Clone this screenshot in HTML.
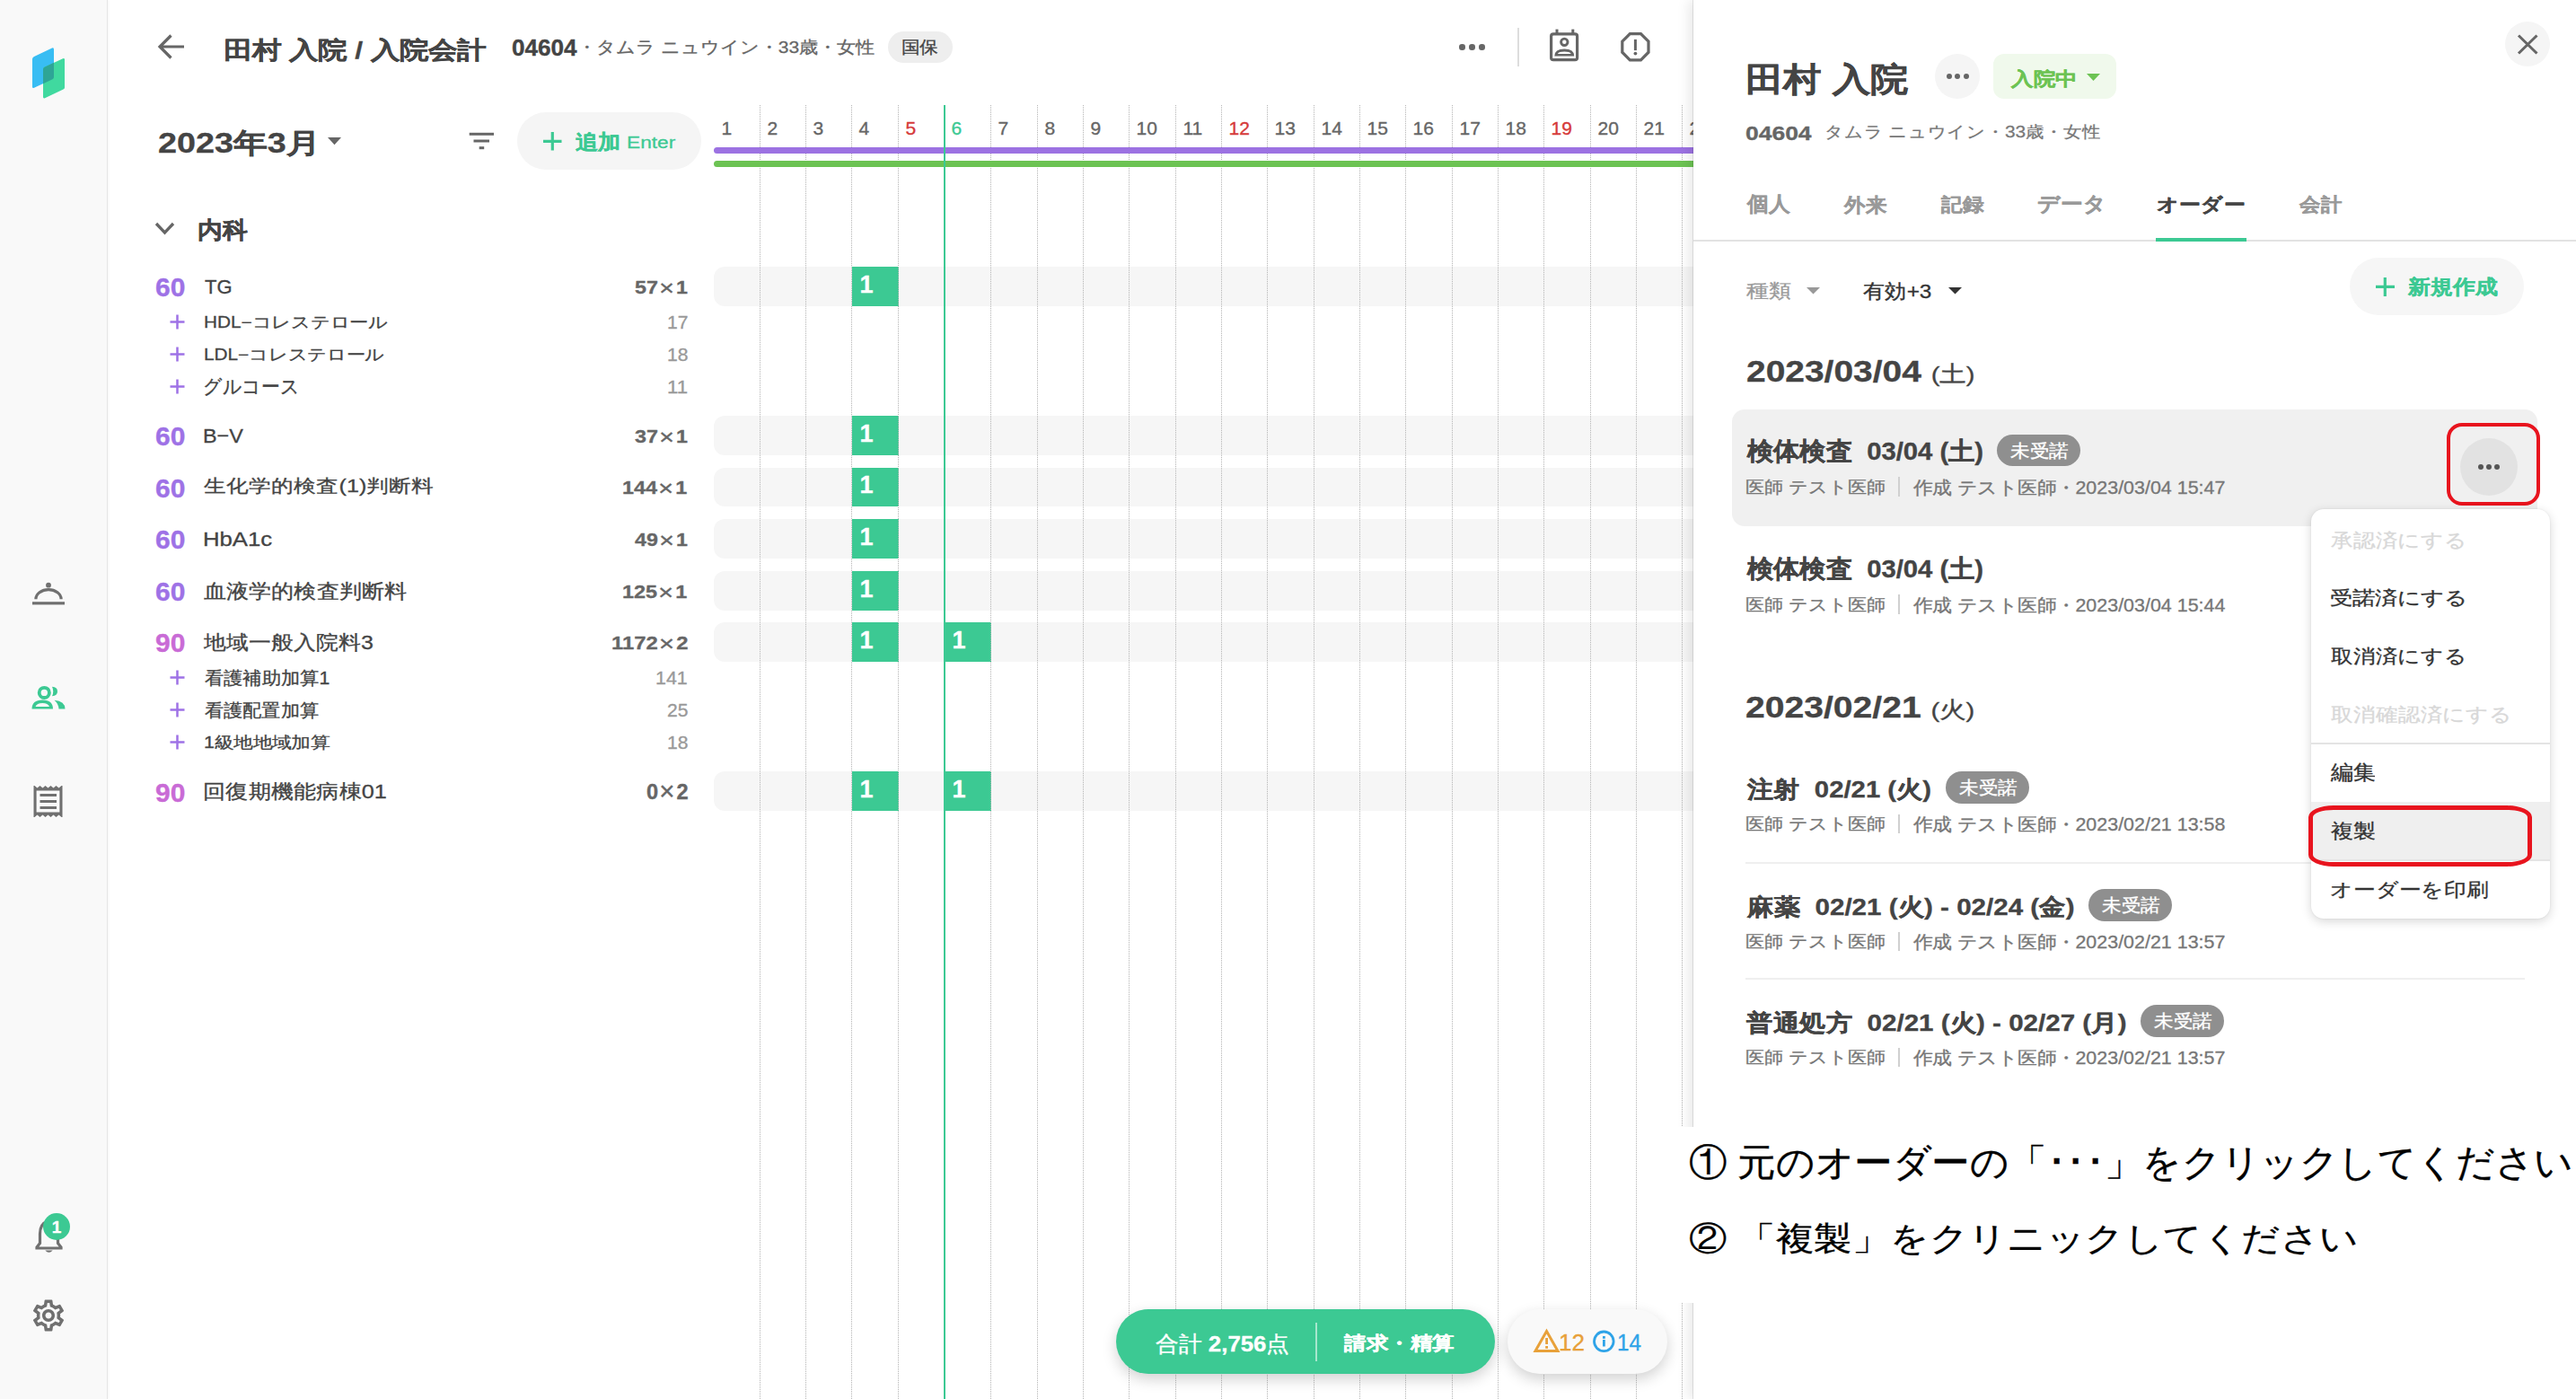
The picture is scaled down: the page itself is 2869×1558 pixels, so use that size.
<!DOCTYPE html><html lang="ja"><head><meta charset="utf-8"><title>order</title><style>
*{box-sizing:border-box;margin:0;padding:0}
html,body{width:2869px;height:1558px;overflow:hidden;background:#fff}
body{position:relative;font-family:"Liberation Sans",sans-serif;color:#444}
.a{position:absolute}
.t{position:absolute;white-space:nowrap;line-height:1;-webkit-text-stroke:0.35px currentColor}
</style></head><body>
<div class="a" style="left:0;top:0;width:120px;height:1558px;background:#f9f9f9;border-right:1px solid #e6e6e6;box-shadow:1px 0 2px rgba(0,0,0,0.04)"></div>
<svg class="a" style="left:30px;top:48px" width="48" height="68" viewBox="30 48 48 68">
<path d="M36 66 Q36 64 38 63 L58 53.5 Q60 52.7 60 55 L60 86 Q60 87.5 58.5 88.2 L38 97.8 Q36 98.6 36 96.5 Z" fill="#38bdf3"/>
<path d="M48 77 Q48 75.5 49.5 74.8 L70 65.2 Q72 64.5 72 66.5 L72 97.5 Q72 99 70.5 99.6 L50 109.3 Q48 110 48 108 Z" fill="#40d99f"/>
<path d="M48 77 Q48 75.5 49.5 74.8 L60 69.8 L60 86 Q60 87.5 58.5 88.2 L48 93.2 Z" fill="#2ea596"/>
</svg>
<svg class="a" style="left:34px;top:646px" width="40" height="30" viewBox="0 0 40 30">
<circle cx="20" cy="5.7" r="2.9" fill="#707070"/>
<path d="M5.9 21.3 A14.1 10.6 0 0 1 34.1 21.3" fill="none" stroke="#707070" stroke-width="3.2"/>
<rect x="2" y="24.2" width="36" height="3.2" fill="#707070"/>
</svg>
<svg class="a" style="left:34px;top:762px" width="40" height="30" viewBox="0 0 40 30">
<circle cx="15.3" cy="9.4" r="5.6" fill="none" stroke="#3cc993" stroke-width="3.8"/>
<path d="M1.5 27.5 Q1.5 17.5 13.3 17.5 Q25 17.5 25 27.5 Z M5.5 25 Q7 21 13.3 21 Q19.5 21 21 25 Z" fill="#3cc993" fill-rule="evenodd"/>
<path d="M24 2.8 Q30 3 30 8 Q30 13 24 13.3 Q26.5 8 24 2.8 Z" fill="#3cc993"/>
<path d="M26.5 17.8 Q38.5 19 38.5 27.5 L31.5 27.5 Q31 21.5 26.5 17.8 Z" fill="#3cc993"/>
</svg>
<svg class="a" style="left:35px;top:873px" width="38" height="40" viewBox="0 0 38 40">
<path d="M3.5 2 L6.5 4.5 L9.5 2 L12.5 4.5 L15.5 2 L18.5 4.5 L21.5 2 L24.5 4.5 L27.5 2 L30.5 4.5 L33.5 2 L34.5 2 L34.5 37 L33.5 37 L30.5 34.5 L27.5 37 L24.5 34.5 L21.5 37 L18.5 34.5 L15.5 37 L12.5 34.5 L9.5 37 L6.5 34.5 L3.5 37 L2.5 37 L2.5 2 Z M5.6 7.5 L5.6 31.5 L31.4 31.5 L31.4 7.5 Z" fill="#707070" fill-rule="evenodd"/>
<rect x="9.5" y="11" width="18.5" height="3" fill="#707070"/>
<rect x="9.5" y="18" width="18.5" height="3" fill="#707070"/>
<rect x="9.5" y="25" width="18.5" height="3" fill="#707070"/>
</svg>
<svg class="a" style="left:36px;top:1352px" width="40" height="48" viewBox="0 0 40 48">
<path d="M17 8 Q8.5 11 8.5 22 L8.5 32.5 L5 37 L5 38 L32 38 L32 37 L28.5 32.5 L28.5 22" fill="none" stroke="#707070" stroke-width="3.2"/>
<path d="M14.3 40.5 Q18.5 45 22.7 40.5 Z" fill="#707070"/>
</svg>
<div class="a" style="left:48px;top:1351px;width:30px;height:30px;border-radius:50%;background:#3cc993"></div>
<div class="t" style="left:48px;top:1357px;width:30px;text-align:center;font-size:19px;font-weight:bold;color:#fff">1</div>
<svg class="a" style="left:33px;top:1444px" width="42" height="42" viewBox="0 0 24 24">
<path fill="#707070" d="M19.43 12.98c.04-.32.07-.64.07-.98 0-.34-.03-.66-.07-.98l2.110-1.650c.19-.15.24-.42.12-.64l-2-3.460a.5.5 0 0 0-.61-.22l-2.490 1c-.52-.4-1.080-.73-1.690-.98l-.38-2.650A.49.49 0 0 0 14 2h-4c-.25 0-.46.18-.49.42l-.38 2.650c-.61.25-1.170.59-1.690.98l-2.490-1a.5.5 0 0 0-.61.22l-2 3.460c-.13.22-.07.49.12.64l2.110 1.650c-.04.32-.07.65-.07.98 0 .33.03.66.07.98l-2.110 1.650c-.19.15-.24.42-.12.64l2 3.460c.12.22.39.3.61.22l2.490-1c.52.4 1.080.73 1.690.98l.38 2.650c.03.24.24.42.49.42h4c.25 0 .46-.18.49-.42l.38-2.650c.61-.25 1.170-.59 1.690-.98l2.490 1c.23.09.49 0 .61-.22l2-3.460c.12-.22.07-.49-.12-.64l-2.110-1.650zM17.45 11.27c.04.31.05.52.05.73 0 .21-.02.43-.05.73l-.14 1.130.89.7 1.080.84-.7 1.210-1.270-.51-1.040-.42-.9.68c-.43.32-.84.56-1.250.73l-1.060.43-.16 1.130-.2 1.350h-1.400l-.19-1.350-.16-1.130-1.060-.43c-.43-.18-.83-.41-1.230-.71l-.91-.7-1.060.43-1.270.51-.7-1.210 1.080-.84.89-.7-.14-1.130c-.03-.31-.05-.54-.05-.74s.02-.43.05-.73l.14-1.130-.89-.7-1.080-.84.7-1.210 1.270.51 1.040.42.9-.68c.43-.32.84-.56 1.250-.73l1.060-.43.16-1.130.2-1.350h1.390l.19 1.350.16 1.130 1.060.43c.43.18.83.41 1.230.71l.91.7 1.060-.43 1.270-.51.7 1.210-1.070.85-.89.7.14 1.130zM12 8c-2.210 0-4 1.790-4 4s1.790 4 4 4 4-1.790 4-4-1.790-4-4-4zm0 6c-1.100 0-2-.9-2-2s.9-2 2-2 2 .9 2 2-.9 2-2 2z"/>
</svg>
<svg class="a" style="left:172px;top:34px" width="38" height="36" viewBox="0 0 38 36">
<path d="M33 18 L6.5 18 M18.5 5.5 L6 18 L18.5 30.5" fill="none" stroke="#666" stroke-width="3.2"/>
</svg>
<div class="t" style="left:248.99px;top:42.60px;font-size:32px;color:#444;font-weight:bold;transform:scale(1.0035,0.8298);transform-origin:0 0;">田村 入院 / 入院会計</div>
<div class="t" style="left:569.96px;top:40.97px;font-size:25px;color:#444;font-weight:bold;transform:scale(1.0435,1.0000);transform-origin:0 0;">04604</div>
<div class="t" style="left:643.40px;top:43.91px;font-size:22px;color:#666;transform:scale(0.9555,0.8606);transform-origin:0 0;">・タムラ ニュウイン・33歳・女性</div>
<div class="a" style="left:989px;top:35px;width:72px;height:35px;border-radius:18px;background:#eee"></div>
<div class="t" style="left:1004.07px;top:44.02px;font-size:22px;color:#444;transform:scale(0.9310,0.8553);transform-origin:0 0;">国保</div>
<div class="a" style="left:1625.2px;top:49px;width:6.6px;height:6.6px;border-radius:50%;background:#666"></div>
<div class="a" style="left:1636.3px;top:49px;width:6.6px;height:6.6px;border-radius:50%;background:#666"></div>
<div class="a" style="left:1647.1000000000001px;top:49px;width:6.6px;height:6.6px;border-radius:50%;background:#666"></div>
<div class="a" style="left:1690px;top:31px;width:2px;height:43px;background:#ddd"></div>
<svg class="a" style="left:1724px;top:30px" width="38" height="42" viewBox="0 0 38 42">
<rect x="3.6" y="7.9" width="29" height="28.8" rx="2.5" fill="none" stroke="#666" stroke-width="3.2"/>
<rect x="8.5" y="2.6" width="3" height="5" fill="#666"/>
<rect x="26.3" y="2.6" width="3" height="5" fill="#666"/>
<circle cx="18.3" cy="16.8" r="3.7" fill="none" stroke="#666" stroke-width="2.9"/>
<path d="M7.3 32.5 Q7.3 24.5 18.3 24.5 Q29.3 24.5 29.3 32.5 Z M10.8 30 Q12.5 27.6 18.3 27.6 Q24.2 27.6 25.8 30 Z" fill="#666" fill-rule="evenodd"/>
</svg>
<svg class="a" style="left:1803px;top:34px" width="38" height="38" viewBox="0 0 38 38">
<path d="M12.35 3.6 L24.45 3.6 L33 12.15 L33 24.25 L24.45 32.8 L12.35 32.8 L3.8 24.25 L3.8 12.15 Z" fill="none" stroke="#666" stroke-width="3.2" stroke-linejoin="miter"/>
<rect x="16.9" y="9.9" width="3" height="12.2" fill="#666"/>
<circle cx="18.4" cy="25.6" r="1.9" fill="#666"/>
</svg>
<div class="t" style="left:175.96px;top:144.00px;font-size:36px;color:#444;font-weight:bold;transform:scale(1.0489,0.8580);transform-origin:0 0;">2023年3月</div>
<svg class="a" style="left:365px;top:153px" width="16" height="9" viewBox="0 0 16 9"><path d="M0 0 L15 0 L7.5 8.2 Z" fill="#666"/></svg>
<svg class="a" style="left:522px;top:146px" width="30" height="22" viewBox="0 0 30 22">
<rect x="0.7" y="1.8" width="27.3" height="3" fill="#666"/>
<rect x="5.5" y="9.5" width="17.5" height="3" fill="#666"/>
<rect x="11.7" y="17.2" width="5.5" height="3" fill="#666"/>
</svg>
<div class="a" style="left:576px;top:125px;width:205px;height:64px;border-radius:32px;background:#f5f5f5"></div>
<svg class="a" style="left:604px;top:146px" width="23" height="23" viewBox="0 0 23 23"><path d="M11.3 1 L11.3 21.5 M1 11.3 L21.5 11.3" stroke="#3cc993" stroke-width="3.2"/></svg>
<div class="t" style="left:641.00px;top:146.96px;font-size:26px;color:#3cc993;font-weight:bold;transform:scale(0.9604,0.8817);transform-origin:0 0;">追加</div>
<div class="t" style="left:698.09px;top:149.30px;font-size:24px;color:#3cc993;transform:scale(0.9462,0.8000);transform-origin:0 0;">Enter</div>
<svg class="a" style="left:171px;top:246px" width="25" height="18" viewBox="0 0 25 18"><path d="M3 3 L12.5 13 L22 3" fill="none" stroke="#666" stroke-width="3.3"/></svg>
<div class="t" style="left:220.04px;top:242.84px;font-size:29px;color:#444;font-weight:bold;transform:scale(0.9654,0.9024);transform-origin:0 0;">内科</div>
<div class="a" style="left:795px;top:297px;width:1200px;height:43.5px;border-radius:12px 0 0 12px;background:#f6f6f6"></div>
<div class="a" style="left:949px;top:297px;width:52px;height:43.5px;background:#3cc993"></div>
<div class="t" style="left:957.50px;top:303.5px;font-size:27px;font-weight:bold;color:#fff">1</div>
<div class="t" style="left:173.01px;top:305.27px;font-size:30px;color:#9e72e6;font-weight:bold;">60</div>
<div class="t" style="left:227.98px;top:308.35px;font-size:25px;color:#444;transform:scale(0.8796,0.9104);transform-origin:0 0;">TG</div>
<div class="t" style="left:706.97px;top:310.69px;font-size:23px;color:#666;font-weight:bold;transform:scale(1.0115,0.8633);transform-origin:0 0;">57<span style="font-weight:normal;font-size:1.25em;line-height:0;padding:0 2px 0 1px;position:relative;top:1.5px">×</span>1</div>
<svg class="a" style="left:188px;top:348.8px" width="20" height="20" viewBox="0 0 20 20"><path d="M9.5 1.5 L9.5 17.5 M1.5 9.5 L17.5 9.5" stroke="#9e72e6" stroke-width="2.5"/></svg>
<div class="t" style="left:227.11px;top:351.01px;font-size:22px;color:#444;transform:scale(0.9439,0.8000);transform-origin:0 0;">HDL−コレステロール</div>
<div class="t" style="left:742.73px;top:348.52px;font-size:22px;color:#999;transform:scale(0.9574,0.9294);transform-origin:0 0;">17</div>
<svg class="a" style="left:188px;top:384.8px" width="20" height="20" viewBox="0 0 20 20"><path d="M9.5 1.5 L9.5 17.5 M1.5 9.5 L17.5 9.5" stroke="#9e72e6" stroke-width="2.5"/></svg>
<div class="t" style="left:227.11px;top:387.01px;font-size:22px;color:#444;transform:scale(0.9429,0.8000);transform-origin:0 0;">LDL−コレステロール</div>
<div class="t" style="left:742.76px;top:384.52px;font-size:22px;color:#999;transform:scale(0.9574,0.9294);transform-origin:0 0;">18</div>
<svg class="a" style="left:188px;top:420.8px" width="20" height="20" viewBox="0 0 20 20"><path d="M9.5 1.5 L9.5 17.5 M1.5 9.5 L17.5 9.5" stroke="#9e72e6" stroke-width="2.5"/></svg>
<div class="t" style="left:226.11px;top:419.75px;font-size:22px;color:#444;transform:scale(0.9448,1.0000);transform-origin:0 0;">グルコース</div>
<div class="t" style="left:742.62px;top:420.52px;font-size:22px;color:#999;transform:scale(1.0070,0.9294);transform-origin:0 0;">11</div>
<div class="a" style="left:795px;top:463px;width:1200px;height:43.5px;border-radius:12px 0 0 12px;background:#f6f6f6"></div>
<div class="a" style="left:949px;top:463px;width:52px;height:43.5px;background:#3cc993"></div>
<div class="t" style="left:957.50px;top:469.5px;font-size:27px;font-weight:bold;color:#fff">1</div>
<div class="t" style="left:173.01px;top:471.27px;font-size:30px;color:#9e72e6;font-weight:bold;">60</div>
<div class="t" style="left:226.10px;top:474.35px;font-size:25px;color:#444;transform:scale(0.9355,0.9104);transform-origin:0 0;">B−V</div>
<div class="t" style="left:707.41px;top:476.69px;font-size:23px;color:#666;font-weight:bold;transform:scale(1.0115,0.8633);transform-origin:0 0;">37<span style="font-weight:normal;font-size:1.25em;line-height:0;padding:0 2px 0 1px;position:relative;top:1.5px">×</span>1</div>
<div class="a" style="left:795px;top:520.7px;width:1200px;height:43.5px;border-radius:12px 0 0 12px;background:#f6f6f6"></div>
<div class="a" style="left:949px;top:520.7px;width:52px;height:43.5px;background:#3cc993"></div>
<div class="t" style="left:957.50px;top:527.2px;font-size:27px;font-weight:bold;color:#fff">1</div>
<div class="t" style="left:173.01px;top:528.93px;font-size:30px;color:#9e72e6;font-weight:bold;">60</div>
<div class="t" style="left:227.00px;top:531.33px;font-size:25px;color:#444;transform:scale(1.0039,0.8144);transform-origin:0 0;">生化学的検査(1)判断料</div>
<div class="t" style="left:693.45px;top:534.35px;font-size:23px;color:#666;font-weight:bold;transform:scale(1.0173,0.8633);transform-origin:0 0;">144<span style="font-weight:normal;font-size:1.25em;line-height:0;padding:0 2px 0 1px;position:relative;top:1.5px">×</span>1</div>
<div class="a" style="left:795px;top:578px;width:1200px;height:43.5px;border-radius:12px 0 0 12px;background:#f6f6f6"></div>
<div class="a" style="left:949px;top:578px;width:52px;height:43.5px;background:#3cc993"></div>
<div class="t" style="left:957.50px;top:584.5px;font-size:27px;font-weight:bold;color:#fff">1</div>
<div class="t" style="left:173.01px;top:586.27px;font-size:30px;color:#9e72e6;font-weight:bold;">60</div>
<div class="t" style="left:225.94px;top:589.23px;font-size:25px;color:#444;transform:scale(1.0279,0.9152);transform-origin:0 0;">HbA1c</div>
<div class="t" style="left:707.20px;top:591.69px;font-size:23px;color:#666;font-weight:bold;transform:scale(1.0108,0.8633);transform-origin:0 0;">49<span style="font-weight:normal;font-size:1.25em;line-height:0;padding:0 2px 0 1px;position:relative;top:1.5px">×</span>1</div>
<div class="a" style="left:795px;top:636px;width:1200px;height:43.5px;border-radius:12px 0 0 12px;background:#f6f6f6"></div>
<div class="a" style="left:949px;top:636px;width:52px;height:43.5px;background:#3cc993"></div>
<div class="t" style="left:957.50px;top:642.5px;font-size:27px;font-weight:bold;color:#fff">1</div>
<div class="t" style="left:173.01px;top:644.27px;font-size:30px;color:#9e72e6;font-weight:bold;">60</div>
<div class="t" style="left:226.99px;top:646.73px;font-size:25px;color:#444;transform:scale(1.0046,0.8818);transform-origin:0 0;">血液学的検査判断料</div>
<div class="t" style="left:693.45px;top:649.69px;font-size:23px;color:#666;font-weight:bold;transform:scale(1.0173,0.8633);transform-origin:0 0;">125<span style="font-weight:normal;font-size:1.25em;line-height:0;padding:0 2px 0 1px;position:relative;top:1.5px">×</span>1</div>
<div class="a" style="left:795px;top:693px;width:1200px;height:43.5px;border-radius:12px 0 0 12px;background:#f6f6f6"></div>
<div class="a" style="left:949px;top:693px;width:52px;height:43.5px;background:#3cc993"></div>
<div class="t" style="left:957.50px;top:699.5px;font-size:27px;font-weight:bold;color:#fff">1</div>
<div class="a" style="left:1052px;top:693px;width:52px;height:43.5px;background:#3cc993"></div>
<div class="t" style="left:1060.50px;top:699.5px;font-size:27px;font-weight:bold;color:#fff">1</div>
<div class="t" style="left:173.01px;top:701.27px;font-size:30px;color:#c96bd6;font-weight:bold;">90</div>
<div class="t" style="left:227.00px;top:703.69px;font-size:25px;color:#444;transform:scale(1.0000,0.8853);transform-origin:0 0;">地域一般入院料3</div>
<div class="t" style="left:680.96px;top:706.69px;font-size:23px;color:#666;font-weight:bold;transform:scale(1.0374,0.8633);transform-origin:0 0;">1172<span style="font-weight:normal;font-size:1.25em;line-height:0;padding:0 2px 0 1px;position:relative;top:1.5px">×</span>2</div>
<svg class="a" style="left:188px;top:744.8px" width="20" height="20" viewBox="0 0 20 20"><path d="M9.5 1.5 L9.5 17.5 M1.5 9.5 L17.5 9.5" stroke="#9e72e6" stroke-width="2.5"/></svg>
<div class="t" style="left:228.00px;top:745.64px;font-size:22px;color:#444;transform:scale(0.9651,0.9091);transform-origin:0 0;">看護補助加算1</div>
<div class="t" style="left:730.45px;top:744.52px;font-size:22px;color:#999;transform:scale(0.9721,0.9294);transform-origin:0 0;">141</div>
<svg class="a" style="left:188px;top:780.8px" width="20" height="20" viewBox="0 0 20 20"><path d="M9.5 1.5 L9.5 17.5 M1.5 9.5 L17.5 9.5" stroke="#9e72e6" stroke-width="2.5"/></svg>
<div class="t" style="left:228.00px;top:781.64px;font-size:22px;color:#444;transform:scale(0.9619,0.9091);transform-origin:0 0;">看護配置加算</div>
<div class="t" style="left:742.76px;top:780.52px;font-size:22px;color:#999;transform:scale(0.9574,0.9294);transform-origin:0 0;">25</div>
<svg class="a" style="left:188px;top:816.8px" width="20" height="20" viewBox="0 0 20 20"><path d="M9.5 1.5 L9.5 17.5 M1.5 9.5 L17.5 9.5" stroke="#9e72e6" stroke-width="2.5"/></svg>
<div class="t" style="left:227.03px;top:818.80px;font-size:22px;color:#444;transform:scale(0.9719,0.8000);transform-origin:0 0;">1級地地域加算</div>
<div class="t" style="left:742.76px;top:816.52px;font-size:22px;color:#999;transform:scale(0.9574,0.9294);transform-origin:0 0;">18</div>
<div class="a" style="left:795px;top:859.4px;width:1200px;height:43.5px;border-radius:12px 0 0 12px;background:#f6f6f6"></div>
<div class="a" style="left:949px;top:859.4px;width:52px;height:43.5px;background:#3cc993"></div>
<div class="t" style="left:957.50px;top:865.9px;font-size:27px;font-weight:bold;color:#fff">1</div>
<div class="a" style="left:1052px;top:859.4px;width:52px;height:43.5px;background:#3cc993"></div>
<div class="t" style="left:1060.50px;top:865.9px;font-size:27px;font-weight:bold;color:#fff">1</div>
<div class="t" style="left:173.01px;top:867.67px;font-size:30px;color:#c96bd6;font-weight:bold;">90</div>
<div class="t" style="left:225.98px;top:869.98px;font-size:25px;color:#444;transform:scale(1.0100,0.8853);transform-origin:0 0;">回復期機能病棟01</div>
<div class="t" style="left:719.93px;top:870.63px;font-size:23px;color:#666;font-weight:bold;transform:scale(1.0250,1.0000);transform-origin:0 0;">0<span style="font-weight:normal;font-size:1.25em;line-height:0;padding:0 2px 0 1px;position:relative;top:1.5px">×</span>2</div>
<div class="a" style="left:846px;top:117px;width:1px;height:1441px;background:repeating-linear-gradient(to bottom,#b4b4b4 0,#b4b4b4 1px,transparent 1px,transparent 2px)"></div>
<div class="a" style="left:897px;top:117px;width:1px;height:1441px;background:repeating-linear-gradient(to bottom,#b4b4b4 0,#b4b4b4 1px,transparent 1px,transparent 2px)"></div>
<div class="a" style="left:948px;top:117px;width:1px;height:1441px;background:repeating-linear-gradient(to bottom,#b4b4b4 0,#b4b4b4 1px,transparent 1px,transparent 2px)"></div>
<div class="a" style="left:1000px;top:117px;width:1px;height:1441px;background:repeating-linear-gradient(to bottom,#b4b4b4 0,#b4b4b4 1px,transparent 1px,transparent 2px)"></div>
<div class="a" style="left:1103px;top:117px;width:1px;height:1441px;background:repeating-linear-gradient(to bottom,#b4b4b4 0,#b4b4b4 1px,transparent 1px,transparent 2px)"></div>
<div class="a" style="left:1155px;top:117px;width:1px;height:1441px;background:repeating-linear-gradient(to bottom,#b4b4b4 0,#b4b4b4 1px,transparent 1px,transparent 2px)"></div>
<div class="a" style="left:1206px;top:117px;width:1px;height:1441px;background:repeating-linear-gradient(to bottom,#b4b4b4 0,#b4b4b4 1px,transparent 1px,transparent 2px)"></div>
<div class="a" style="left:1257px;top:117px;width:1px;height:1441px;background:repeating-linear-gradient(to bottom,#b4b4b4 0,#b4b4b4 1px,transparent 1px,transparent 2px)"></div>
<div class="a" style="left:1309px;top:117px;width:1px;height:1441px;background:repeating-linear-gradient(to bottom,#b4b4b4 0,#b4b4b4 1px,transparent 1px,transparent 2px)"></div>
<div class="a" style="left:1360px;top:117px;width:1px;height:1441px;background:repeating-linear-gradient(to bottom,#b4b4b4 0,#b4b4b4 1px,transparent 1px,transparent 2px)"></div>
<div class="a" style="left:1411px;top:117px;width:1px;height:1441px;background:repeating-linear-gradient(to bottom,#b4b4b4 0,#b4b4b4 1px,transparent 1px,transparent 2px)"></div>
<div class="a" style="left:1463px;top:117px;width:1px;height:1441px;background:repeating-linear-gradient(to bottom,#b4b4b4 0,#b4b4b4 1px,transparent 1px,transparent 2px)"></div>
<div class="a" style="left:1514px;top:117px;width:1px;height:1441px;background:repeating-linear-gradient(to bottom,#b4b4b4 0,#b4b4b4 1px,transparent 1px,transparent 2px)"></div>
<div class="a" style="left:1565px;top:117px;width:1px;height:1441px;background:repeating-linear-gradient(to bottom,#b4b4b4 0,#b4b4b4 1px,transparent 1px,transparent 2px)"></div>
<div class="a" style="left:1617px;top:117px;width:1px;height:1441px;background:repeating-linear-gradient(to bottom,#b4b4b4 0,#b4b4b4 1px,transparent 1px,transparent 2px)"></div>
<div class="a" style="left:1668px;top:117px;width:1px;height:1441px;background:repeating-linear-gradient(to bottom,#b4b4b4 0,#b4b4b4 1px,transparent 1px,transparent 2px)"></div>
<div class="a" style="left:1719px;top:117px;width:1px;height:1441px;background:repeating-linear-gradient(to bottom,#b4b4b4 0,#b4b4b4 1px,transparent 1px,transparent 2px)"></div>
<div class="a" style="left:1771px;top:117px;width:1px;height:1441px;background:repeating-linear-gradient(to bottom,#b4b4b4 0,#b4b4b4 1px,transparent 1px,transparent 2px)"></div>
<div class="a" style="left:1822px;top:117px;width:1px;height:1441px;background:repeating-linear-gradient(to bottom,#b4b4b4 0,#b4b4b4 1px,transparent 1px,transparent 2px)"></div>
<div class="a" style="left:1873px;top:117px;width:1px;height:1441px;background:repeating-linear-gradient(to bottom,#b4b4b4 0,#b4b4b4 1px,transparent 1px,transparent 2px)"></div>
<div class="a" style="left:1924px;top:117px;width:1px;height:1441px;background:repeating-linear-gradient(to bottom,#b4b4b4 0,#b4b4b4 1px,transparent 1px,transparent 2px)"></div>
<div class="t" style="left:803.50px;top:132px;font-size:21px;color:#666">1</div>
<div class="t" style="left:854.50px;top:132px;font-size:21px;color:#666">2</div>
<div class="t" style="left:905.50px;top:132px;font-size:21px;color:#666">3</div>
<div class="t" style="left:956.50px;top:132px;font-size:21px;color:#666">4</div>
<div class="t" style="left:1008.50px;top:132px;font-size:21px;color:#d63a3a">5</div>
<div class="t" style="left:1059.50px;top:132px;font-size:21px;color:#3cc993">6</div>
<div class="t" style="left:1111.50px;top:132px;font-size:21px;color:#666">7</div>
<div class="t" style="left:1163.50px;top:132px;font-size:21px;color:#666">8</div>
<div class="t" style="left:1214.50px;top:132px;font-size:21px;color:#666">9</div>
<div class="t" style="left:1265.50px;top:132px;font-size:21px;color:#666">10</div>
<div class="t" style="left:1317.50px;top:132px;font-size:21px;color:#666">11</div>
<div class="t" style="left:1368.50px;top:132px;font-size:21px;color:#d63a3a">12</div>
<div class="t" style="left:1419.50px;top:132px;font-size:21px;color:#666">13</div>
<div class="t" style="left:1471.50px;top:132px;font-size:21px;color:#666">14</div>
<div class="t" style="left:1522.50px;top:132px;font-size:21px;color:#666">15</div>
<div class="t" style="left:1573.50px;top:132px;font-size:21px;color:#666">16</div>
<div class="t" style="left:1625.50px;top:132px;font-size:21px;color:#666">17</div>
<div class="t" style="left:1676.50px;top:132px;font-size:21px;color:#666">18</div>
<div class="t" style="left:1727.50px;top:132px;font-size:21px;color:#d63a3a">19</div>
<div class="t" style="left:1779.50px;top:132px;font-size:21px;color:#666">20</div>
<div class="t" style="left:1830.50px;top:132px;font-size:21px;color:#666">21</div>
<div class="t" style="left:1881.50px;top:132px;font-size:21px;color:#666">22</div>
<div class="a" style="left:795px;top:164px;width:1200px;height:7px;border-radius:3.5px;background:#9c72e2"></div>
<div class="a" style="left:795px;top:179px;width:1200px;height:7px;border-radius:3.5px;background:#6cc353"></div>
<div class="a" style="left:1051px;top:117px;width:2px;height:1441px;background:#3cc993"></div>
<div class="a" style="left:1243px;top:1458px;width:422px;height:72px;border-radius:36px;background:#3cc993;box-shadow:0 6px 16px rgba(0,0,0,0.18)"></div>
<div class="t" style="left:1287.00px;top:1485.00px;font-size:26px;color:#fff;transform:scale(0.9933,0.9259);transform-origin:0 0;">合計 <b>2,756</b>点</div>
<div class="a" style="left:1464.5px;top:1473px;width:2px;height:43px;background:rgba(255,255,255,0.55)"></div>
<div class="t" style="left:1496.97px;top:1484.89px;font-size:26px;color:#fff;font-weight:bold;transform:scale(0.9465,0.8128);transform-origin:0 0;">請求・精算</div>
<div class="a" style="left:1679px;top:1458px;width:178px;height:72px;border-radius:36px;background:#f9f9f9;box-shadow:0 6px 16px rgba(0,0,0,0.18)"></div>
<svg class="a" style="left:1707px;top:1479px" width="32" height="28" viewBox="0 0 32 28">
<path d="M15.5 3.5 L28 25.5 L3 25.5 Z" fill="none" stroke="#e8a13a" stroke-width="3"/>
<rect x="14.2" y="11" width="2.8" height="7" fill="#e8a13a"/><rect x="14.2" y="20" width="2.8" height="2.8" fill="#e8a13a"/>
</svg>
<div class="t" style="left:1736.00px;top:1482.00px;font-size:26px;color:#e8a13a;">12</div>
<svg class="a" style="left:1772px;top:1480px" width="29" height="28" viewBox="0 0 29 28">
<circle cx="14.3" cy="13.8" r="10.8" fill="none" stroke="#2ea3e8" stroke-width="2.8"/>
<rect x="13" y="12" width="2.8" height="7.5" fill="#2ea3e8"/><rect x="13" y="8" width="2.8" height="2.8" fill="#2ea3e8"/>
</svg>
<div class="t" style="left:1801.09px;top:1482.00px;font-size:26px;color:#2ea3e8;transform:scale(0.9274,1.0000);transform-origin:0 0;">14</div>
<div class="a" style="left:1886px;top:0;width:983px;height:1558px;background:#fff;box-shadow:-1px 0 0 rgba(0,0,0,0.09),-4px 0 14px rgba(0,0,0,0.10)"></div>
<div class="t" style="left:1943.96px;top:69.89px;font-size:42px;color:#444;font-weight:bold;transform:scale(1.0113,0.8860);transform-origin:0 0;">田村 入院</div>
<div class="a" style="left:2155px;top:60px;width:50px;height:50px;border-radius:50%;background:#f5f5f5"></div>
<div class="a" style="left:2167.5px;top:81.7px;width:6px;height:6px;border-radius:50%;background:#666"></div>
<div class="a" style="left:2177.3px;top:81.7px;width:6px;height:6px;border-radius:50%;background:#666"></div>
<div class="a" style="left:2187px;top:81.7px;width:6px;height:6px;border-radius:50%;background:#666"></div>
<div class="a" style="left:2220px;top:60px;width:137px;height:50px;border-radius:12px;background:#f0f9ec"></div>
<div class="t" style="left:2240.00px;top:76.85px;font-size:24px;color:#6cc353;font-weight:bold;transform:scale(1.0299,0.8814);transform-origin:0 0;">入院中</div>
<svg class="a" style="left:2324px;top:81.5px" width="16" height="9" viewBox="0 0 16 9"><path d="M0 0 L15 0 L7.5 8 Z" fill="#6cc353"/></svg>
<div class="t" style="left:1943.94px;top:137.17px;font-size:25px;color:#666;font-weight:bold;transform:scale(1.0582,0.9007);transform-origin:0 0;">04604</div>
<div class="t" style="left:2032.27px;top:137.80px;font-size:23px;color:#777;transform:scale(0.9075,0.8023);transform-origin:0 0;">タムラ ニュウイン・33歳・女性</div>
<div class="a" style="left:2790px;top:24px;width:50px;height:50px;border-radius:50%;background:#f5f5f5"></div>
<svg class="a" style="left:2802px;top:37px" width="26" height="25" viewBox="0 0 26 25"><path d="M3 2.5 L23.5 22.5 M23.5 2.5 L3 22.5" stroke="#666" stroke-width="3"/></svg>
<div class="t" style="left:1945.91px;top:215.02px;font-size:26px;color:#999;font-weight:bold;transform:scale(0.9159,0.8867);transform-origin:0 0;">個人</div>
<div class="t" style="left:2053.89px;top:216.86px;font-size:26px;color:#999;font-weight:bold;transform:scale(0.9060,0.8498);transform-origin:0 0;">外来</div>
<div class="t" style="left:2161.91px;top:216.77px;font-size:26px;color:#999;font-weight:bold;transform:scale(0.9258,0.8225);transform-origin:0 0;">記録</div>
<div class="t" style="left:2269.05px;top:214.52px;font-size:26px;color:#999;font-weight:bold;transform:scale(0.9602,0.8929);transform-origin:0 0;">データ</div>
<div class="t" style="left:2402.07px;top:216.79px;font-size:26px;color:#444;font-weight:bold;transform:scale(0.9322,0.8183);transform-origin:0 0;">オーダー</div>
<div class="t" style="left:2560.99px;top:216.87px;font-size:26px;color:#999;font-weight:bold;transform:scale(0.9045,0.8128);transform-origin:0 0;">会計</div>
<div class="a" style="left:1886px;top:267px;width:983px;height:2px;background:#e2e2e2"></div>
<div class="a" style="left:2401px;top:265px;width:101px;height:4px;background:#3cc993"></div>
<div class="t" style="left:1945.00px;top:312.94px;font-size:24px;color:#999;transform:scale(1.0436,0.8770);transform-origin:0 0;">種類</div>
<svg class="a" style="left:2012px;top:320px" width="16" height="8" viewBox="0 0 16 8"><path d="M0 0 L15 0 L7.5 7.5 Z" fill="#999"/></svg>
<div class="t" style="left:2075.00px;top:312.82px;font-size:24px;color:#333;transform:scale(1.0137,0.9334);transform-origin:0 0;">有効+3</div>
<svg class="a" style="left:2169.5px;top:320px" width="16" height="8" viewBox="0 0 16 8"><path d="M0 0 L15 0 L7.5 7.5 Z" fill="#333"/></svg>
<div class="a" style="left:2617px;top:287px;width:194px;height:64px;border-radius:32px;background:#f6f6f6"></div>
<svg class="a" style="left:2645px;top:307.5px" width="23" height="23" viewBox="0 0 23 23"><path d="M11.3 1 L11.3 22 M1 11.3 L22 11.3" stroke="#3cc993" stroke-width="3.2"/></svg>
<div class="t" style="left:2682.00px;top:307.88px;font-size:25px;color:#3cc993;font-weight:bold;transform:scale(1.0001,0.8846);transform-origin:0 0;">新規作成</div>
<div class="t" style="left:1944.92px;top:398.14px;font-size:36px;color:#444;font-weight:bold;transform:scale(1.0816,0.9152);transform-origin:0 0;">2023/03/04 <span style="font-weight:normal;font-size:27px">(土)</span></div>
<div class="t" style="left:1943.91px;top:771.81px;font-size:36px;color:#444;font-weight:bold;transform:scale(1.0859,0.9152);transform-origin:0 0;">2023/02/21 <span style="font-weight:normal;font-size:27px">(火)</span></div>
<div class="a" style="left:1929px;top:456px;width:897px;height:129.5px;border-radius:14px;background:#f0f0f0"></div>
<div class="t" style="left:1946.04px;top:489.25px;font-size:28px;color:#444;font-weight:bold;transform:scale(1.0437,1.0000);transform-origin:0 0;">検体検査&nbsp; 03/04 (土)</div>
<div class="a" style="left:2224px;top:483.8px;width:93px;height:35.5px;border-radius:18px;background:#8f8f8f"></div>
<div class="t" style="left:2239.00px;top:493.10px;font-size:22px;color:#fff;transform:scale(0.9847,0.9110);transform-origin:0 0;">未受諾</div>
<div class="t" style="left:1944.04px;top:533.73px;font-size:22px;color:#777;transform:scale(0.9565,0.8601);transform-origin:0 0;">医師 テスト医師</div>
<div class="a" style="left:2114px;top:531.3px;width:2px;height:21.5px;background:#d0d0d0"></div>
<div class="t" style="left:2131.00px;top:533.87px;font-size:22px;color:#777;transform:scale(0.9747,0.8910);transform-origin:0 0;">作成 テスト医師・2023/03/04 15:47</div>
<div class="t" style="left:1946.04px;top:620.04px;font-size:28px;color:#444;font-weight:bold;transform:scale(1.0437,1.0000);transform-origin:0 0;">検体検査&nbsp; 03/04 (土)</div>
<div class="t" style="left:1944.04px;top:664.55px;font-size:22px;color:#777;transform:scale(0.9565,0.8601);transform-origin:0 0;">医師 テスト医師</div>
<div class="a" style="left:2114px;top:662.1px;width:2px;height:21.5px;background:#d0d0d0"></div>
<div class="t" style="left:2131.00px;top:664.65px;font-size:22px;color:#777;transform:scale(0.9747,0.8910);transform-origin:0 0;">作成 テスト医師・2023/03/04 15:44</div>
<div class="t" style="left:1945.99px;top:865.84px;font-size:28px;color:#444;font-weight:bold;transform:scale(1.0462,0.9386);transform-origin:0 0;">注射&nbsp; 02/21 (火)</div>
<div class="a" style="left:2166.5px;top:859px;width:93px;height:35.5px;border-radius:18px;background:#8f8f8f"></div>
<div class="t" style="left:2181.51px;top:868.40px;font-size:22px;color:#fff;transform:scale(0.9847,0.9110);transform-origin:0 0;">未受諾</div>
<div class="t" style="left:1944.04px;top:908.92px;font-size:22px;color:#777;transform:scale(0.9565,0.8601);transform-origin:0 0;">医師 テスト医師</div>
<div class="a" style="left:2114px;top:906.5px;width:2px;height:21.5px;background:#d0d0d0"></div>
<div class="t" style="left:2131.00px;top:909.09px;font-size:22px;color:#777;transform:scale(0.9747,0.8910);transform-origin:0 0;">作成 テスト医師・2023/02/21 13:58</div>
<div class="a" style="left:1944px;top:959.5px;width:868px;height:2px;background:#efefef"></div>
<div class="t" style="left:1945.99px;top:996.84px;font-size:28px;color:#444;font-weight:bold;transform:scale(1.0553,0.9386);transform-origin:0 0;">麻薬&nbsp; 02/21 (火) - 02/24 (金)</div>
<div class="a" style="left:2326px;top:990px;width:93px;height:35.5px;border-radius:18px;background:#8f8f8f"></div>
<div class="t" style="left:2341.00px;top:999.40px;font-size:22px;color:#fff;transform:scale(0.9847,0.9110);transform-origin:0 0;">未受諾</div>
<div class="t" style="left:1944.04px;top:1039.92px;font-size:22px;color:#777;transform:scale(0.9565,0.8601);transform-origin:0 0;">医師 テスト医師</div>
<div class="a" style="left:2114px;top:1037.5px;width:2px;height:21.5px;background:#d0d0d0"></div>
<div class="t" style="left:2131.00px;top:1040.09px;font-size:22px;color:#777;transform:scale(0.9747,0.8910);transform-origin:0 0;">作成 テスト医師・2023/02/21 13:57</div>
<div class="a" style="left:1944px;top:1089px;width:868px;height:2px;background:#efefef"></div>
<div class="t" style="left:1945.00px;top:1125.71px;font-size:28px;color:#444;font-weight:bold;transform:scale(1.0550,0.9386);transform-origin:0 0;">普通処方&nbsp; 02/21 (火) - 02/27 (月)</div>
<div class="a" style="left:2384px;top:1119px;width:93px;height:35.5px;border-radius:18px;background:#8f8f8f"></div>
<div class="t" style="left:2399.00px;top:1128.40px;font-size:22px;color:#fff;transform:scale(0.9847,0.9110);transform-origin:0 0;">未受諾</div>
<div class="t" style="left:1944.04px;top:1168.92px;font-size:22px;color:#777;transform:scale(0.9565,0.8601);transform-origin:0 0;">医師 テスト医師</div>
<div class="a" style="left:2114px;top:1166.5px;width:2px;height:21.5px;background:#d0d0d0"></div>
<div class="t" style="left:2131.00px;top:1169.09px;font-size:22px;color:#777;transform:scale(0.9747,0.8910);transform-origin:0 0;">作成 テスト医師・2023/02/21 13:57</div>
<div class="a" style="left:2739.5px;top:488px;width:64px;height:64px;border-radius:50%;background:#e2e2e2"></div>
<div class="a" style="left:2759.8px;top:517px;width:6px;height:6px;border-radius:50%;background:#555"></div>
<div class="a" style="left:2768.9px;top:517px;width:6px;height:6px;border-radius:50%;background:#555"></div>
<div class="a" style="left:2778px;top:517px;width:6px;height:6px;border-radius:50%;background:#555"></div>
<div class="a" style="left:2725px;top:471px;width:104px;height:92px;border:4.8px solid #e8141e;border-radius:17px"></div>
<div class="a" style="left:2574px;top:566.7px;width:266px;height:456px;border-radius:14px;background:#fff;box-shadow:0 3px 12px rgba(0,0,0,0.16),0 0 2px rgba(0,0,0,0.08)"></div>
<div class="a" style="left:2574px;top:892.5px;width:266px;height:65px;background:#efefef"></div>
<div class="a" style="left:2574px;top:827px;width:266px;height:1.5px;background:#e4e4e4"></div>
<div class="a" style="left:2574px;top:957px;width:266px;height:1.5px;background:#e4e4e4"></div>
<div class="t" style="left:2596.01px;top:590.58px;font-size:25px;color:#d8d8d8;transform:scale(0.9933,0.8476);transform-origin:0 0;">承認済にする</div>
<div class="t" style="left:2595.00px;top:656.00px;font-size:25px;color:#333;transform:scale(1.0001,0.8231);transform-origin:0 0;">受諾済にする</div>
<div class="t" style="left:2596.01px;top:720.09px;font-size:25px;color:#333;transform:scale(0.9933,0.8476);transform-origin:0 0;">取消済にする</div>
<div class="t" style="left:2596.00px;top:784.56px;font-size:25px;color:#d8d8d8;transform:scale(0.9950,0.8476);transform-origin:0 0;">取消確認済にする</div>
<div class="t" style="left:2596.01px;top:848.63px;font-size:25px;color:#333;transform:scale(0.9800,0.9008);transform-origin:0 0;">編集</div>
<div class="t" style="left:2596.01px;top:914.00px;font-size:25px;color:#333;transform:scale(1.0004,0.8815);transform-origin:0 0;">複製</div>
<div class="t" style="left:2595.00px;top:979.54px;font-size:25px;color:#333;transform:scale(0.9944,0.8414);transform-origin:0 0;">オーダーを印刷</div>
<div class="a" style="left:2571px;top:897px;width:249px;height:68px;border:5px solid #e8141e;border-radius:28px/13px"></div>
<div class="a" style="left:1860px;top:1255px;width:1009px;height:196px;background:#fff"></div>
<div class="t" style="left:1880.99px;top:1274.00px;font-size:42px;color:#000;transform:scale(1.0134,1.0000);transform-origin:0 0;">① 元のオーダーの「･･･」をクリックしてください</div>
<div class="t" style="left:1880.99px;top:1361.00px;font-size:42px;color:#000;transform:scale(1.0109,0.8816);transform-origin:0 0;">② 「複製」をクリニックしてください</div>
</body></html>
